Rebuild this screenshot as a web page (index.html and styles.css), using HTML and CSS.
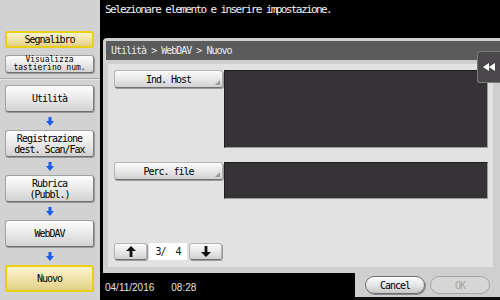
FILE: index.html
```html
<!DOCTYPE html>
<html lang="it">
<head>
  <meta charset="UTF-8" />
  <title>WebDAV - Nuovo</title>
  <link rel="stylesheet" href="styles.css">
</head>
<body>
  <div class="screen">
    <aside class="sidebar">
      <div class="side-top">
        <button class="side-btn short selected">Segnalibro</button>
        <button class="side-btn short squeeze">Visualizza<br>tastierino num.</button>
      </div>
      <nav class="side-path">
        <button class="side-btn">Utilità</button>
        <span class="down"><svg width="8" height="9" viewBox="0 0 8 9"><path d="M2.5 0h3v4H8L4 9 0 4h2.5z" fill="#1d5ce6"/></svg></span>
        <button class="side-btn two">Registrazione<br>dest. Scan/Fax</button>
        <span class="down"><svg width="8" height="9" viewBox="0 0 8 9"><path d="M2.5 0h3v4H8L4 9 0 4h2.5z" fill="#1d5ce6"/></svg></span>
        <button class="side-btn two">Rubrica<br>(Pubbl.)</button>
        <span class="down"><svg width="8" height="9" viewBox="0 0 8 9"><path d="M2.5 0h3v4H8L4 9 0 4h2.5z" fill="#1d5ce6"/></svg></span>
        <button class="side-btn">WebDAV</button>
        <span class="down"><svg width="8" height="9" viewBox="0 0 8 9"><path d="M2.5 0h3v4H8L4 9 0 4h2.5z" fill="#1d5ce6"/></svg></span>
        <button class="side-btn selected">Nuovo</button>
      </nav>
    </aside>

    <main class="main">
      <div class="message">Selezionare elemento e inserire impostazione.</div>

      <section class="panel">
        <div class="panel-head">Utilità &gt; WebDAV &gt; Nuovo</div>
        <div class="panel-body">
          <div class="field">
            <button class="key">Ind. Host</button>
            <div class="value host"></div>
          </div>
          <div class="field">
            <button class="key">Perc. file</button>
            <div class="value path"></div>
          </div>
          <div class="pager">
            <button class="page-btn"><svg width="10" height="11" viewBox="0 0 10 11"><path d="M5 0l5 5H6.4v6H3.6V5H0z" fill="#111"/></svg></button>
            <span class="page-num">3/  4</span>
            <button class="page-btn"><svg width="10" height="11" viewBox="0 0 10 11"><path d="M5 11L0 6h3.6V0h2.8v6H10z" fill="#111"/></svg></button>
          </div>
        </div>
        <!-- linguetta per chiudere il pannello -->
        <button class="collapse"><svg width="12" height="8" viewBox="0 0 12 8"><path d="M0 4l6-4v8zM6 4l6-4v8z" fill="#fff"/></svg></button>
      </section>

      <footer class="footer">
        <div class="clock"><span>04/11/2016</span><span>08:28</span></div>
        <div class="actions">
          <button class="pill">Cancel</button>
          <button class="pill off">OK</button>
        </div>
      </footer>
    </main>
  </div>
</body>
</html>
```

FILE: styles.css
```css
html, body {
  margin: 0;
  padding: 0;
  background: #000;
}
.screen {
  display: flex;
  width: 500px;
  height: 300px;
  overflow: hidden;
  font-family: 'DejaVu Sans Mono', 'Liberation Mono', monospace;
  font-size: 10px;
  letter-spacing: -1px;
}
button {
  font-family: inherit;
  font-size: inherit;
  letter-spacing: inherit;
  padding: 0;
  margin: 0;
  color: #000;
  cursor: pointer;
}

/* colonna di sinistra */
.sidebar {
  width: 100px;
  flex: none;
  background: #d2d2d2;
}
.side-top {
  height: 79px;
  box-sizing: border-box;
  padding-top: 31px;
  border-bottom: 1px solid #a9a9a9;
  box-shadow: 0 1px 0 #e6e6e6;
}
.side-path {
  padding-top: 6px;
}
.side-btn {
  display: block;
  width: 89px;
  height: 27px;
  margin-left: 5px;
  box-sizing: border-box;
  border: 1px solid #a2a2a2;
  border-bottom-color: #6e6e6e;
  border-right-color: #808080;
  border-radius: 3px;
  background: linear-gradient(#fdfdfd, #ececec 45%, #d2d2d2);
  box-shadow: 1px 1px 0 #9a9a9a;
  line-height: 11px;
  text-align: center;
}
.side-btn.short {
  height: 17px;
}
.side-btn.squeeze {
  height: 18px;
  margin-top: 7px;
  font-size: 8px;
  letter-spacing: 0;
  line-height: 8px;
}
.side-btn.selected {
  border: 2px solid #e9cf12;
  background: linear-gradient(#fbf4cf, #efe2a6 55%, #e2d08a);
  box-shadow: none;
}
.down {
  display: flex;
  justify-content: center;
  align-items: center;
  height: 18px;
}

/* zona principale */
.main {
  flex: 1;
  display: flex;
  flex-direction: column;
}
.message {
  height: 38px;
  box-sizing: border-box;
  padding: 3px 0 0 5px;
  color: #f2f2f2;
  font-size: 11px;
  letter-spacing: -1.6px;
}
.panel {
  position: relative;
  height: 235px;
  margin-left: 3px;
  box-sizing: border-box;
  padding: 3px 0 0 3px;
  background: #cfcfcf;
  border-radius: 4px 0 0 0;
}
.panel-head {
  height: 19px;
  line-height: 19px;
  padding-left: 5px;
  background: #5b5b5b;
  color: #ececec;
}
.panel-body {
  display: flex;
  flex-direction: column;
  height: 203px;
  margin: 4px 7px 0 2px;
  box-sizing: border-box;
  padding: 6px 5px 7px 6px;
  background: #e2e2e2;
}
.field {
  display: flex;
  gap: 1px;
  align-items: flex-start;
}
.field + .field {
  margin-top: 14px;
}
.key {
  position: relative;
  width: 109px;
  height: 18px;
  flex: none;
  border: 1px solid #b4b4b4;
  border-bottom-color: #707070;
  border-radius: 3px;
  background: linear-gradient(#fbfbfb, #e8e8e8 50%, #d2d2d2);
  box-shadow: 1px 1px 0 #9a9a9a;
}
.key::after {
  content: "";
  position: absolute;
  right: 2px;
  bottom: 2px;
  border-left: 5px solid transparent;
  border-bottom: 5px solid #9a9a9a;
}
.value {
  flex: 1;
  box-sizing: border-box;
  background: #353335;
  border: 1px solid #1e1e1e;
  border-right-color: #9a9a9a;
  border-bottom-color: #9a9a9a;
}
.value.host {
  height: 78px;
}
.value.path {
  height: 37px;
}
.pager {
  display: flex;
  gap: 2px;
  margin-top: auto;
  height: 17px;
}
.page-btn {
  width: 33px;
  display: flex;
  align-items: center;
  justify-content: center;
  border: 1px solid #b4b4b4;
  border-bottom-color: #707070;
  border-radius: 3px;
  background: linear-gradient(#fbfbfb, #e8e8e8 50%, #d2d2d2);
  box-shadow: 1px 1px 0 #9a9a9a;
}
.page-num {
  width: 38px;
  background: #fff;
  line-height: 17px;
  text-align: center;
  white-space: pre;
  color: #111;
}
.collapse {
  position: absolute;
  right: 0;
  top: 13px;
  width: 23px;
  height: 32px;
  display: flex;
  align-items: center;
  justify-content: center;
  border: 1px solid #7a7a7a;
  border-right: none;
  border-radius: 3px 0 0 3px;
  background: #4a484a;
}

/* barra in basso */
.footer {
  display: flex;
  height: 27px;
}
.clock {
  width: 255px;
  display: flex;
  gap: 17px;
  padding: 9px 0 0 5px;
  box-sizing: border-box;
  font-family: 'Liberation Sans', Arial, sans-serif;
  font-size: 10px;
  letter-spacing: 0;
  color: #e4e4e4;
}
.actions {
  flex: 1;
  display: flex;
  gap: 5px;
  padding: 3px 0 0 10px;
  background: #cfcfcf;
  border-bottom: 3px solid #111;
}
.pill {
  width: 60px;
  height: 18px;
  border: 1px solid #6e6e6e;
  border-radius: 9px;
  background: linear-gradient(#fdfdfd, #e6e6e6 50%, #c8c8c8);
  box-shadow: 1px 1px 0 #8a8a8a;
}
.pill.off {
  border-color: #a6a6a6;
  background: #d6d6d6;
  color: #a4a4a4;
  box-shadow: none;
}
```
